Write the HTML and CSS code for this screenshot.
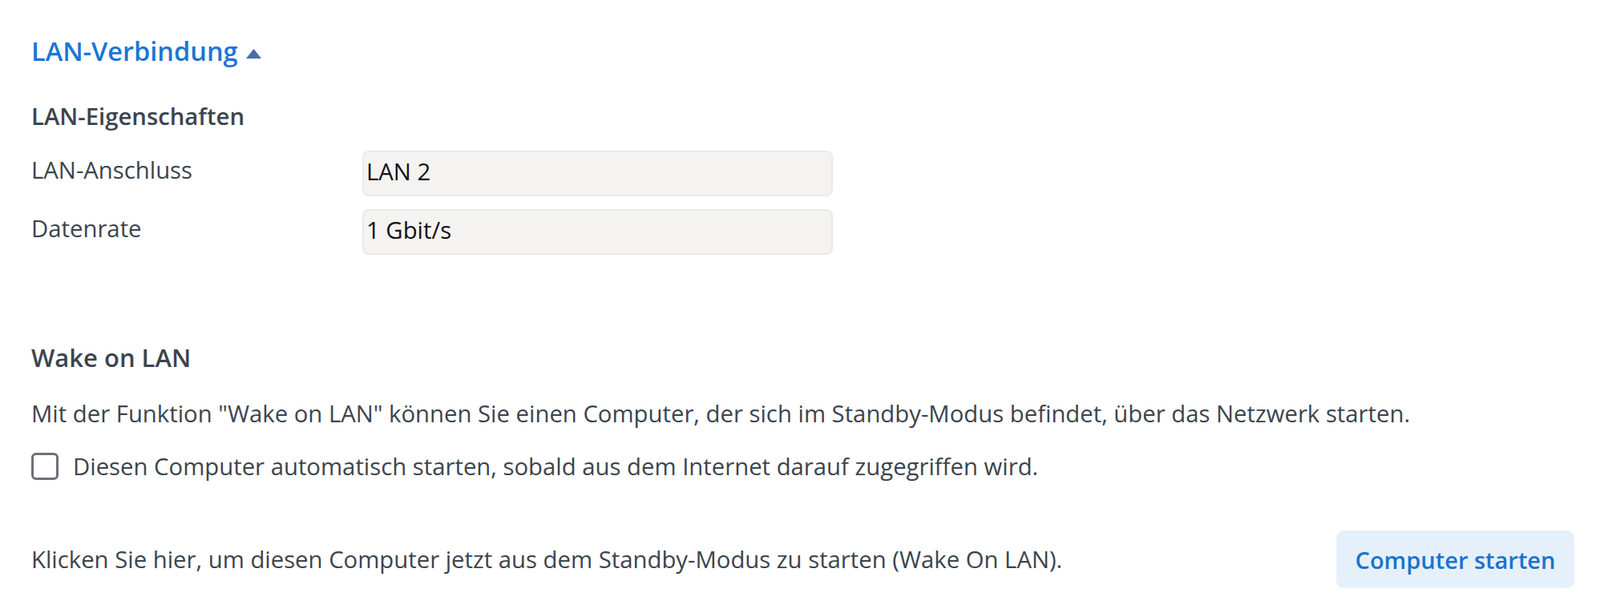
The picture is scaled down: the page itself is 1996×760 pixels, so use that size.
FILE: index.html
```html
<!DOCTYPE html>
<html lang="de">
<head>
<meta charset="utf-8">
<title>LAN-Verbindung</title>
<link rel="stylesheet" href="styles.css">
</head>
<body>
<main class="panel">
  <button class="toggle" type="button">LAN-Verbindung<svg class="caret" width="19" height="12" viewBox="0 0 19 12"><path d="M9.5 0 L19 12 L0 12 Z"/></svg></button>

  <section class="props">
    <h3 class="sub">LAN-Eigenschaften</h3>
    <div class="row">
      <span class="label">LAN-Anschluss</span>
      <div class="field">LAN 2</div>
    </div>
    <div class="row">
      <span class="label">Datenrate</span>
      <div class="field">1 Gbit/s</div>
    </div>
  </section>

  <section class="wol">
    <h3 class="sub sub-wide">Wake on LAN</h3>
    <p class="text">Mit der Funktion "Wake on LAN" können Sie einen Computer, der sich im Standby-Modus befindet, über das Netzwerk starten.</p>
    <label class="check"><span class="box"></span><span class="text">Diesen Computer automatisch starten, sobald aus dem Internet darauf zugegriffen wird.</span></label>
    <div class="start">
      <p class="text">Klicken Sie hier, um diesen Computer jetzt aus dem Standby-Modus zu starten (Wake On LAN).</p>
      <button class="btn" type="button">Computer starten</button>
    </div>
  </section>
</main>
</body>
</html>
```
FILE: styles.css
```css
* { box-sizing: border-box; }
body {
  margin: 0;
  background: #fff;
  font-family: "Open Sans", "Noto Sans", sans-serif;
  color: #3c444e;
}
.panel {
  padding: 42px 32px 0 39px;
}
.toggle {
  display: flex;
  align-items: center;
  gap: 10px;
  padding: 0;
  border: 0;
  background: none;
  font: 600 32.5px/44px "Open Sans", sans-serif;
  color: #1a76d2;
}
.caret { fill: #4a6ca8; margin-top: 6px; }
.sub {
  margin: 0;
  font: 600 29.3px/40px "Open Sans", sans-serif;
  color: #3c444e;
}
.sub-wide { font-size: 31px; }
.props { margin-top: 39px; }
.props .sub { margin-bottom: 23px; }
.row {
  display: grid;
  grid-template-columns: 413px 587px;
  align-items: center;
}
.row + .row { margin-top: 16px; }
.label {
  align-self: start;
  margin-top: 4px;
  font-size: 29.3px;
  line-height: 40px;
}
.field {
  height: 57px;
  padding: 0 3px 6px;
  display: flex;
  align-items: center;
  background: #f4f3f1;
  border: 2px solid #eaeae8;
  border-radius: 8px;
  font-size: 29.3px;
  color: #111;
}
.wol { margin-top: 108px; }
.wol .sub { margin-bottom: 30px; }
.text { margin: 0; font-size: 29.3px; line-height: 40px; }
.check { display: flex; align-items: center; gap: 18px; margin-top: 26px; }
.box {
  width: 34px; height: 34px;
  border: 3px solid #6b7178;
  border-radius: 6px;
}
.start {
  display: flex;
  align-items: center;
  justify-content: space-between;
  margin-top: 60px;
}
.btn {
  width: 297px; height: 72px;
  border: 0;
  border-radius: 9px;
  background: #e5f0fa;
  color: #1a73cc;
  font: 600 29px "Open Sans", sans-serif;
}
```
